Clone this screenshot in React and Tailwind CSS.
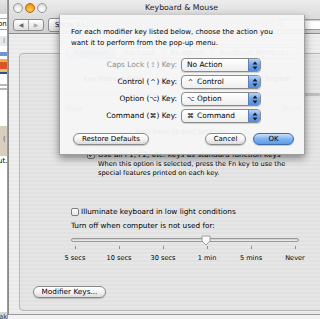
import React from "react";

function Light({ color }) {
  if (color === "orange") {
    return (
      <div className="w-[10px] h-[10px] rounded-full border border-[#b86a10] bg-[radial-gradient(circle_at_50%_70%,#ffd36a_0%,#f7a21b_55%,#d9780a_100%)]" />
    );
  }
  return (
    <div className="w-[10px] h-[10px] rounded-full border border-[#9a9a9a] bg-[radial-gradient(circle_at_50%_70%,#ffffff_0%,#e4e4e4_60%,#c8c8c8_100%)]" />
  );
}

function Arrows() {
  return (
    <svg width="6" height="9" viewBox="0 0 6 9">
      <path d="M3 0.5 L5.5 3.5 L0.5 3.5 Z" fill="#1a1a1a" />
      <path d="M3 8.5 L5.5 5.5 L0.5 5.5 Z" fill="#1a1a1a" />
    </svg>
  );
}

function Sym({ children }) {
  return (
    <span className="inline-block w-[7px] text-center text-[6.5px] font-['DejaVu_Sans',sans-serif]">{children}</span>
  );
}

function Popup({ label, sym }) {
  return (
    <div className="ml-[4px] w-[80px] h-[14px] flex rounded-[4px] border border-[#8a8a8a] bg-gradient-to-b from-[#ffffff] to-[#eeeeee] shadow-[0_1px_1px_rgba(0,0,0,0.15)] overflow-hidden">
      <div className="flex-1 pl-[5px] flex items-center whitespace-nowrap text-[7.4px]">
        {sym && <Sym>{sym}</Sym>}
        {sym && <span className="w-[3px]" />}
        {label}
      </div>
      <div className="w-[12px] flex items-center justify-center border-l border-[#5b7fb8] bg-gradient-to-b from-[#b5d3f7] via-[#6ea3ea] to-[#4d8ee6]">
        <Arrows />
      </div>
    </div>
  );
}

function Pill({ children, className = "", blue = false }) {
  return (
    <div
      className={
        "h-[12px] flex items-center justify-center rounded-full whitespace-nowrap shadow-[0_1px_1px_rgba(0,0,0,0.2)] " +
        (blue
          ? "border border-[#3d6aa8] bg-gradient-to-b from-[#c9e0fa] via-[#7fb3ee] to-[#5d9cea] "
          : "border border-[#8a8a8a] bg-gradient-to-b from-[#ffffff] via-[#f3f3f3] to-[#dcdcdc] ") +
        className
      }
    >
      {children}
    </div>
  );
}

function LeftStrip() {
  return (
    <div className="w-[8px] shrink-0 h-full flex flex-col bg-white border-r border-[#9a9a9a] overflow-hidden text-[7px] leading-[10px]">
      <div className="h-[14px] bg-gradient-to-b from-[#e6e6e6] to-[#d0d0d0]" />
      <div className="h-[4px]" />
      <div className="h-[12px] border-y border-[#a8a8a8] bg-white whitespace-nowrap -ml-[2px]">on</div>
      <div className="h-[6px]" />
      <div className="h-[10px] bg-[#e8e8e8] text-[#888] pl-[3px]">I</div>
      <div className="h-[6px] bg-white" />
      <div className="h-[4px] bg-[#6d95d8]" />
      <div className="h-[3px] bg-white" />
      <div className="h-[3px] bg-[#f0b040]" />
      <div className="h-[7px] bg-[#d9562a]" />
      <div className="h-[3px] bg-[#e8c060]" />
      <div className="h-[2px] bg-[#2a4fa0]" />
      <div className="h-[10px] bg-white" />
      <div className="h-[2px] bg-[#b8b8b8]" />
      <div className="h-[2px] bg-white" />
      <div className="h-[2px] bg-[#b8b8b8]" />
      <div className="h-[36px] bg-white" />
      <div className="h-[30px] bg-[#d8cfbf] pl-[3px] pt-[8px] text-[#555]">(</div>
      <div className="h-[10px] bg-white whitespace-nowrap -ml-[2px]">ut.</div>
      <div className="flex-1 bg-white" />
      <div className="h-[7px] bg-[#d6d6d6] whitespace-nowrap -ml-[1px] text-[#444]">ak</div>
    </div>
  );
}

function Checkbox({ checked }) {
  return (
    <div className="w-[8px] h-[8px] rounded-[2px] border border-[#7d7d7d] bg-gradient-to-b from-[#ffffff] to-[#e6e6e6] flex items-center justify-center">
      {checked && (
        <svg width="8" height="8" viewBox="0 0 8 8">
          <path d="M1.5 4 L3.2 6 L7 0.5" stroke="#222" strokeWidth="1.3" fill="none" />
        </svg>
      )}
    </div>
  );
}

function Window() {
  const ticks = ["5 secs", "10 secs", "30 secs", "1 min", "5 mins", "Never"];
  return (
    <div className="w-[346px] shrink-0 h-[315px] flex flex-col border-l border-[#8a8a8a] border-b border-b-[#9a9a9a]">
      {/* Title bar + toolbar */}
      <div className="h-[34px] shrink-0 flex flex-col bg-gradient-to-b from-[#ececec] to-[#cfcfcf] border-b border-[#8c8c8c]">
        <div className="h-[16px] grid grid-cols-[1fr_auto_1fr] items-center">
          <div className="flex items-center gap-[2px] pl-[4px]">
            <Light />
            <Light color="orange" />
            <Light />
          </div>
          <div className="text-[7.8px] leading-[10px] text-[#1a1a1a] whitespace-nowrap">Keyboard &amp; Mouse</div>
          <div />
        </div>
        <div className="flex-1 flex items-center">
          <div className="ml-[4px] w-[31px] h-[12px] flex rounded-[3px] border border-[#8d8d8d] bg-gradient-to-b from-[#ffffff] to-[#dedede]">
            <div className="flex-1 flex items-center justify-center border-r border-[#a8a8a8] text-[6px] text-[#666]">◀</div>
            <div className="flex-1 flex items-center justify-center text-[6px] text-[#aaa]">▶</div>
          </div>
          <div className="ml-[4px] w-[40px] h-[14px] flex items-center pl-[6px] rounded-[3px] border border-[#8d8d8d] bg-gradient-to-b from-[#ffffff] to-[#dedede] whitespace-nowrap">
            Show All
          </div>
          <div className="flex-1" />
          <div className="mr-[2px] w-[80px] h-[11px] rounded-full border border-[#9a9a9a] bg-white flex items-center pl-[4px] shadow-[inset_0_1px_1px_rgba(0,0,0,0.2)]">
            <svg width="7" height="7" viewBox="0 0 7 7">
              <circle cx="2.8" cy="2.8" r="2" stroke="#666" strokeWidth="0.9" fill="none" />
              <path d="M4.3 4.3 L6.5 6.5" stroke="#666" strokeWidth="1.1" />
            </svg>
          </div>
        </div>
      </div>
      {/* Body */}
      <div className="flex-1 px-[10px] pt-[19px] bg-[repeating-linear-gradient(to_bottom,#eeeeee_0px,#eeeeee_2px,#e9e9e9_2px,#e9e9e9_4px)] text-[7.3px]">
        <div className="h-[258px] rounded-[4px] border border-[#b8b8b8] bg-[repeating-linear-gradient(to_bottom,#e6e6e6_0px,#e6e6e6_2px,#e1e1e1_2px,#e1e1e1_4px)] flex flex-col">
          {/* Tabs */}
          <div className="self-center -mt-[7px] w-[232px] h-[12px] flex rounded-[3px] border border-[#9a9a9a] bg-gradient-to-b from-[#ffffff] to-[#e0e0e0] text-[#222] text-[7px]">
            <div className="w-[49px] flex items-center justify-center border-r border-[#aaa] bg-gradient-to-b from-[#cfe2f8] to-[#7fb0ea]">Keyboard</div>
            <div className="w-[48px] flex items-center justify-center border-r border-[#aaa]">Trackpad</div>
            <div className="w-[49px] flex items-center justify-center border-r border-[#aaa]">Bluetooth</div>
            <div className="flex-1 flex items-center justify-center whitespace-nowrap">Keyboard Shortcuts</div>
          </div>
          {/* Key repeat row */}
          <div className="mt-[15px] ml-[63px] w-[208px] h-[10px] flex justify-between whitespace-nowrap">
            <span>Key Repeat Rate</span>
            <span>Delay Until Repeat</span>
          </div>
          <div className="mt-[6px] ml-[46px] w-[254px] h-[8px] flex justify-between items-center">
            <div className="w-[90px] h-[3px] rounded-full bg-[#bdbdbd]" />
            <div className="w-[90px] h-[3px] rounded-full bg-[#bdbdbd]" />
          </div>
          <div className="mt-[6px] ml-[46px] w-[235px] h-[10px] flex justify-between whitespace-nowrap text-[#444]">
            <span>Slow</span>
            <span>Short</span>
          </div>
          <div className="mt-[13px] ml-[114px] h-[10px] whitespace-nowrap">Type here to test settings:</div>
          {/* Fn keys */}
          <div className="mt-[13px] ml-[67px] h-[10px] flex items-center gap-[3px] whitespace-nowrap">
            <Checkbox checked />
            <span>Use all F1, F2, etc. keys as standard function keys</span>
          </div>
          <div className="ml-[78px] text-[6.6px] leading-[9px] whitespace-nowrap">
            When this option is selected, press the Fn key to use the
            <br />
            special features printed on each key.
          </div>
          {/* Illuminate */}
          <div className="mt-[29px] ml-[51px] h-[10px] flex items-center gap-[2px] whitespace-nowrap">
            <Checkbox />
            <span>Illuminate keyboard in low light conditions</span>
          </div>
          <div className="mt-[4px] ml-[51px] h-[10px] whitespace-nowrap">Turn off when computer is not used for:</div>
          {/* Slider */}
          <div className="mt-[3px] ml-[51px] w-[228px] h-[12px] flex items-center">
            <div className="w-full h-[4px] rounded-full border border-[#9a9a9a] bg-gradient-to-b from-[#c8c8c8] to-[#f2f2f2]" />
          </div>
          <div className="ml-[33px] w-[264px] h-[4px] grid grid-cols-6">
            {ticks.map((t) => (
              <div key={t} className="flex justify-center">
                <div className="w-px h-[3px] bg-[#8a8a8a]" />
              </div>
            ))}
          </div>
          <div className="mt-[3px] ml-[33px] w-[264px] h-[10px] grid grid-cols-6 text-[6.6px]">
            {ticks.map((t) => (
              <div key={t} className="text-center whitespace-nowrap">{t}</div>
            ))}
          </div>
          <Pill className="mt-[23px] ml-[13px] w-[73px] self-start">Modifier Keys...</Pill>
        </div>
      </div>
    </div>
  );
}

function SliderThumb() {
  return (
    <svg width="10" height="11" viewBox="0 0 10 11" className="absolute left-[201px] top-[235px]">
      <path d="M1 1 L9 1 L9 6 L5 10 L1 6 Z" fill="#fafafa" stroke="#8a8a8a" strokeWidth="0.8" />
    </svg>
  );
}

function Sheet() {
  const rows = [
    { pre: "Caps Lock (", sym: "⇪", post: ") Key:", value: "No Action", dim: true },
    { pre: "Control (", sym: "^", post: ") Key:", value: "Control", vsym: "^" },
    { pre: "Option (", sym: "⌥", post: ") Key:", value: "Option", vsym: "⌥" },
    { pre: "Command (", sym: "⌘", post: ") Key:", value: "Command", vsym: "⌘" },
  ];
  return (
    <div className="absolute left-[59px] top-[15px] w-[246px] h-[140px] flex flex-col bg-[rgba(245,245,245,0.95)] border border-[#a0a0a0] border-t-0 shadow-[0_3px_8px_rgba(0,0,0,0.45)]">
      <div className="pt-[12px] pl-[11px] leading-[11px] whitespace-nowrap">
        For each modifier key listed below, choose the action you
        <br />
        want it to perform from the pop-up menu.
      </div>
      <div className="mt-[9px] flex flex-col gap-[3px]">
        {rows.map((r) => (
          <div key={r.pre} className="h-[14px] flex items-center">
            <div className={"w-[117px] text-right whitespace-nowrap text-[7.4px] " + (r.dim ? "text-[#8c8c8c]" : "")}>
              {r.pre}
              <Sym>{r.sym}</Sym>
              {r.post}
            </div>
            <Popup label={r.value} sym={r.vsym} />
          </div>
        ))}
      </div>
      <div className="mt-[10px] flex">
        <Pill className="ml-[13px] w-[76px]">Restore Defaults</Pill>
        <Pill className="ml-[56px] w-[41px]">Cancel</Pill>
        <Pill blue className="ml-[7px] w-[41px]">OK</Pill>
      </div>
    </div>
  );
}

export default function App() {
  return (
    <div className="relative w-[320px] h-[319px] overflow-hidden bg-[#f3f3f3] font-['DejaVu_Sans',sans-serif] text-[7px] leading-[10px] text-black">
      <div className="flex w-[354px] h-full">
        <LeftStrip />
        <Window />
      </div>
      <SliderThumb />
      <Sheet />
    </div>
  );
}
